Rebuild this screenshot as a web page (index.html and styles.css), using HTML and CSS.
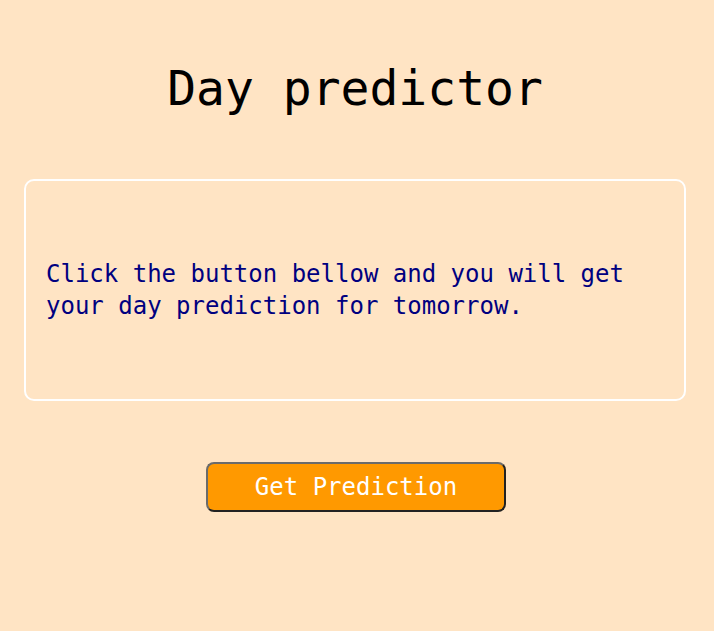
FILE: index.html
```html
<!DOCTYPE html>
<html>
<head>
<meta charset="utf-8">
<link rel="stylesheet" href="styles.css">
</head>
<body>
<main class="page">
  <h1 class="title">Day predictor</h1>
  <div class="card">
    <p class="message">Click the button bellow and you will get your day prediction for tomorrow.</p>
  </div>
  <div class="actions">
    <button class="predict-btn">Get Prediction</button>
  </div>
</main>
</body>
</html>
```

FILE: styles.css
```css
html, body {
  margin: 0;
  padding: 0;
  background: #ffe4c4;
  height: 100%;
}
body {
  font-family: "DejaVu Sans Mono", monospace;
}
.page {
  padding: 0 28px 0 24px;
  display: flex;
  flex-direction: column;
}
.title {
  margin: 57px 0 0;
  height: 62px;
  line-height: 62px;
  font-size: 48px;
  font-weight: normal;
  text-align: center;
  color: #000;
}
.card {
  margin-top: 60px;
  height: 222px;
  box-sizing: border-box;
  border: 2px solid #fff;
  border-radius: 10px;
  padding: 0 20px;
  display: flex;
  align-items: center;
}
.message {
  margin: 0;
  font-size: 24px;
  line-height: 32px;
  color: #000080;
}
.actions {
  margin-top: 61px;
  display: flex;
  justify-content: center;
  padding-left: 2px;
}
.predict-btn {
  width: 300px;
  height: 50px;
  box-sizing: border-box;
  background: #ff9900;
  color: #fff;
  font-family: "DejaVu Sans Mono", monospace;
  font-size: 24px;
  border: 2px solid;
  border-color: #6b6b6b #222 #222 #6b6b6b;
  border-radius: 8px;
  padding: 0;
}
```
